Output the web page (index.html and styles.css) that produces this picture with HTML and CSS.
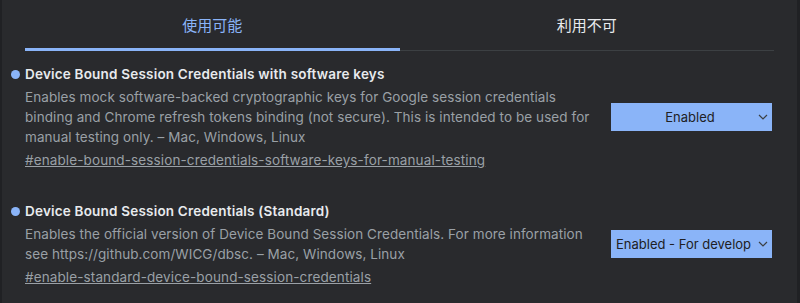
FILE: index.html
```html
<!DOCTYPE html>
<html lang="ja">
<head>
<meta charset="utf-8">
<title>Experiments</title>
<link rel="stylesheet" href="styles.css">
</head>
<body>
<div class="page">
  <div class="tabs">
    <div class="tab active">使用可能</div>
    <div class="tab">利用不可</div>
  </div>
  <div class="experiment">
    <div class="exp-text">
      <h3 class="exp-title"><span class="dot"></span>Device Bound Session Credentials with software keys</h3>
      <p class="exp-desc">Enables mock software-backed cryptographic keys for Google session credentials binding and Chrome refresh tokens binding (not secure). This is intended to be used for manual testing only. – Mac, Windows, Linux</p>
      <a class="exp-link" href="#">#enable-bound-session-credentials-software-keys-for-manual-testing</a>
    </div>
    <div class="select centered"><span class="sel-label">Enabled</span><svg class="chev" width="10" height="6" viewBox="0 0 10 6"><path d="M1 1l4 4 4-4" fill="none" stroke="#3c4043" stroke-width="1.2"/></svg></div>
  </div>
  <div class="experiment">
    <div class="exp-text">
      <h3 class="exp-title"><span class="dot"></span>Device Bound Session Credentials (Standard)</h3>
      <p class="exp-desc">Enables the official version of Device Bound Session Credentials. For more information see https://github.com/WICG/dbsc. – Mac, Windows, Linux</p>
      <a class="exp-link" href="#">#enable-standard-device-bound-session-credentials</a>
    </div>
    <div class="select"><span class="sel-label">Enabled - For develop</span><svg class="chev" width="10" height="6" viewBox="0 0 10 6"><path d="M1 1l4 4 4-4" fill="none" stroke="#3c4043" stroke-width="1.2"/></svg></div>
  </div>
</div>
</body>
</html>
```
FILE: styles.css
```css
html, body {
  margin: 0;
  padding: 0;
  background: #292a2d;
  height: 100%;
  overflow: hidden;
}
body {
  font-family: Inter, "Liberation Sans", "Noto Sans CJK JP", sans-serif;
  font-size: 13.5px;
  color: #e8eaed;
  border-left: 2px solid #202124;
  border-right: 3px solid #202124;
  box-sizing: border-box;
}
.page {
  padding: 0 23px 0 23px;
}
.tabs {
  display: grid;
  grid-template-columns: 1fr 1fr;
  height: 51px;
}
.tab {
  display: flex;
  align-items: center;
  justify-content: center;
  font-family: "Noto Sans CJK JP", sans-serif;
  font-size: 15px;
  font-weight: 400;
  color: #e8eaed;
  border-bottom: 1px solid #3c4043;
  padding-bottom: 2px;
}
.tab.active {
  color: #8ab4f8;
  border-bottom: 3px solid #8ab4f8;
  padding-bottom: 0;
}
.experiment {
  display: flex;
  align-items: center;
  gap: 12px;
  padding: 15px 0 18px;
}
.exp-text {
  flex: 1;
}
.exp-title {
  display: flex;
  align-items: center;
  gap: 5px;
  margin: 0 0 4px -14px;
  font-size: 13.5px;
  font-weight: 600;
  letter-spacing: 0.2px;
  line-height: 17px;
  color: #e8eaed;
}
.dot {
  width: 9px;
  height: 9px;
  border-radius: 50%;
  background: #8ab4f8;
}
.exp-desc {
  margin: 0;
  font-size: 13.5px;
  letter-spacing: 0.07px;
  line-height: 20px;
  color: #9aa0a6;
}
.exp-link {
  display: inline-block;
  margin-top: 3px;
  line-height: 20px;
  letter-spacing: 0.12px;
  color: #9aa0a6;
  text-decoration: underline;
}
.select {
  flex: none;
  width: 161px;
  height: 28px;
  box-sizing: border-box;
  margin: 0 2px 3px 0;
  background: #8ab4f8;
  color: #202124;
  display: flex;
  align-items: center;
  padding: 0 4px 0 5px;
  font-size: 13px;
}
.sel-label {
  flex: 1;
  white-space: nowrap;
  overflow: hidden;
}
.select.centered .sel-label {
  text-align: center;
  padding-left: 8px;
}
.chev {
  flex: none;
  margin-left: 2px;
}
```
